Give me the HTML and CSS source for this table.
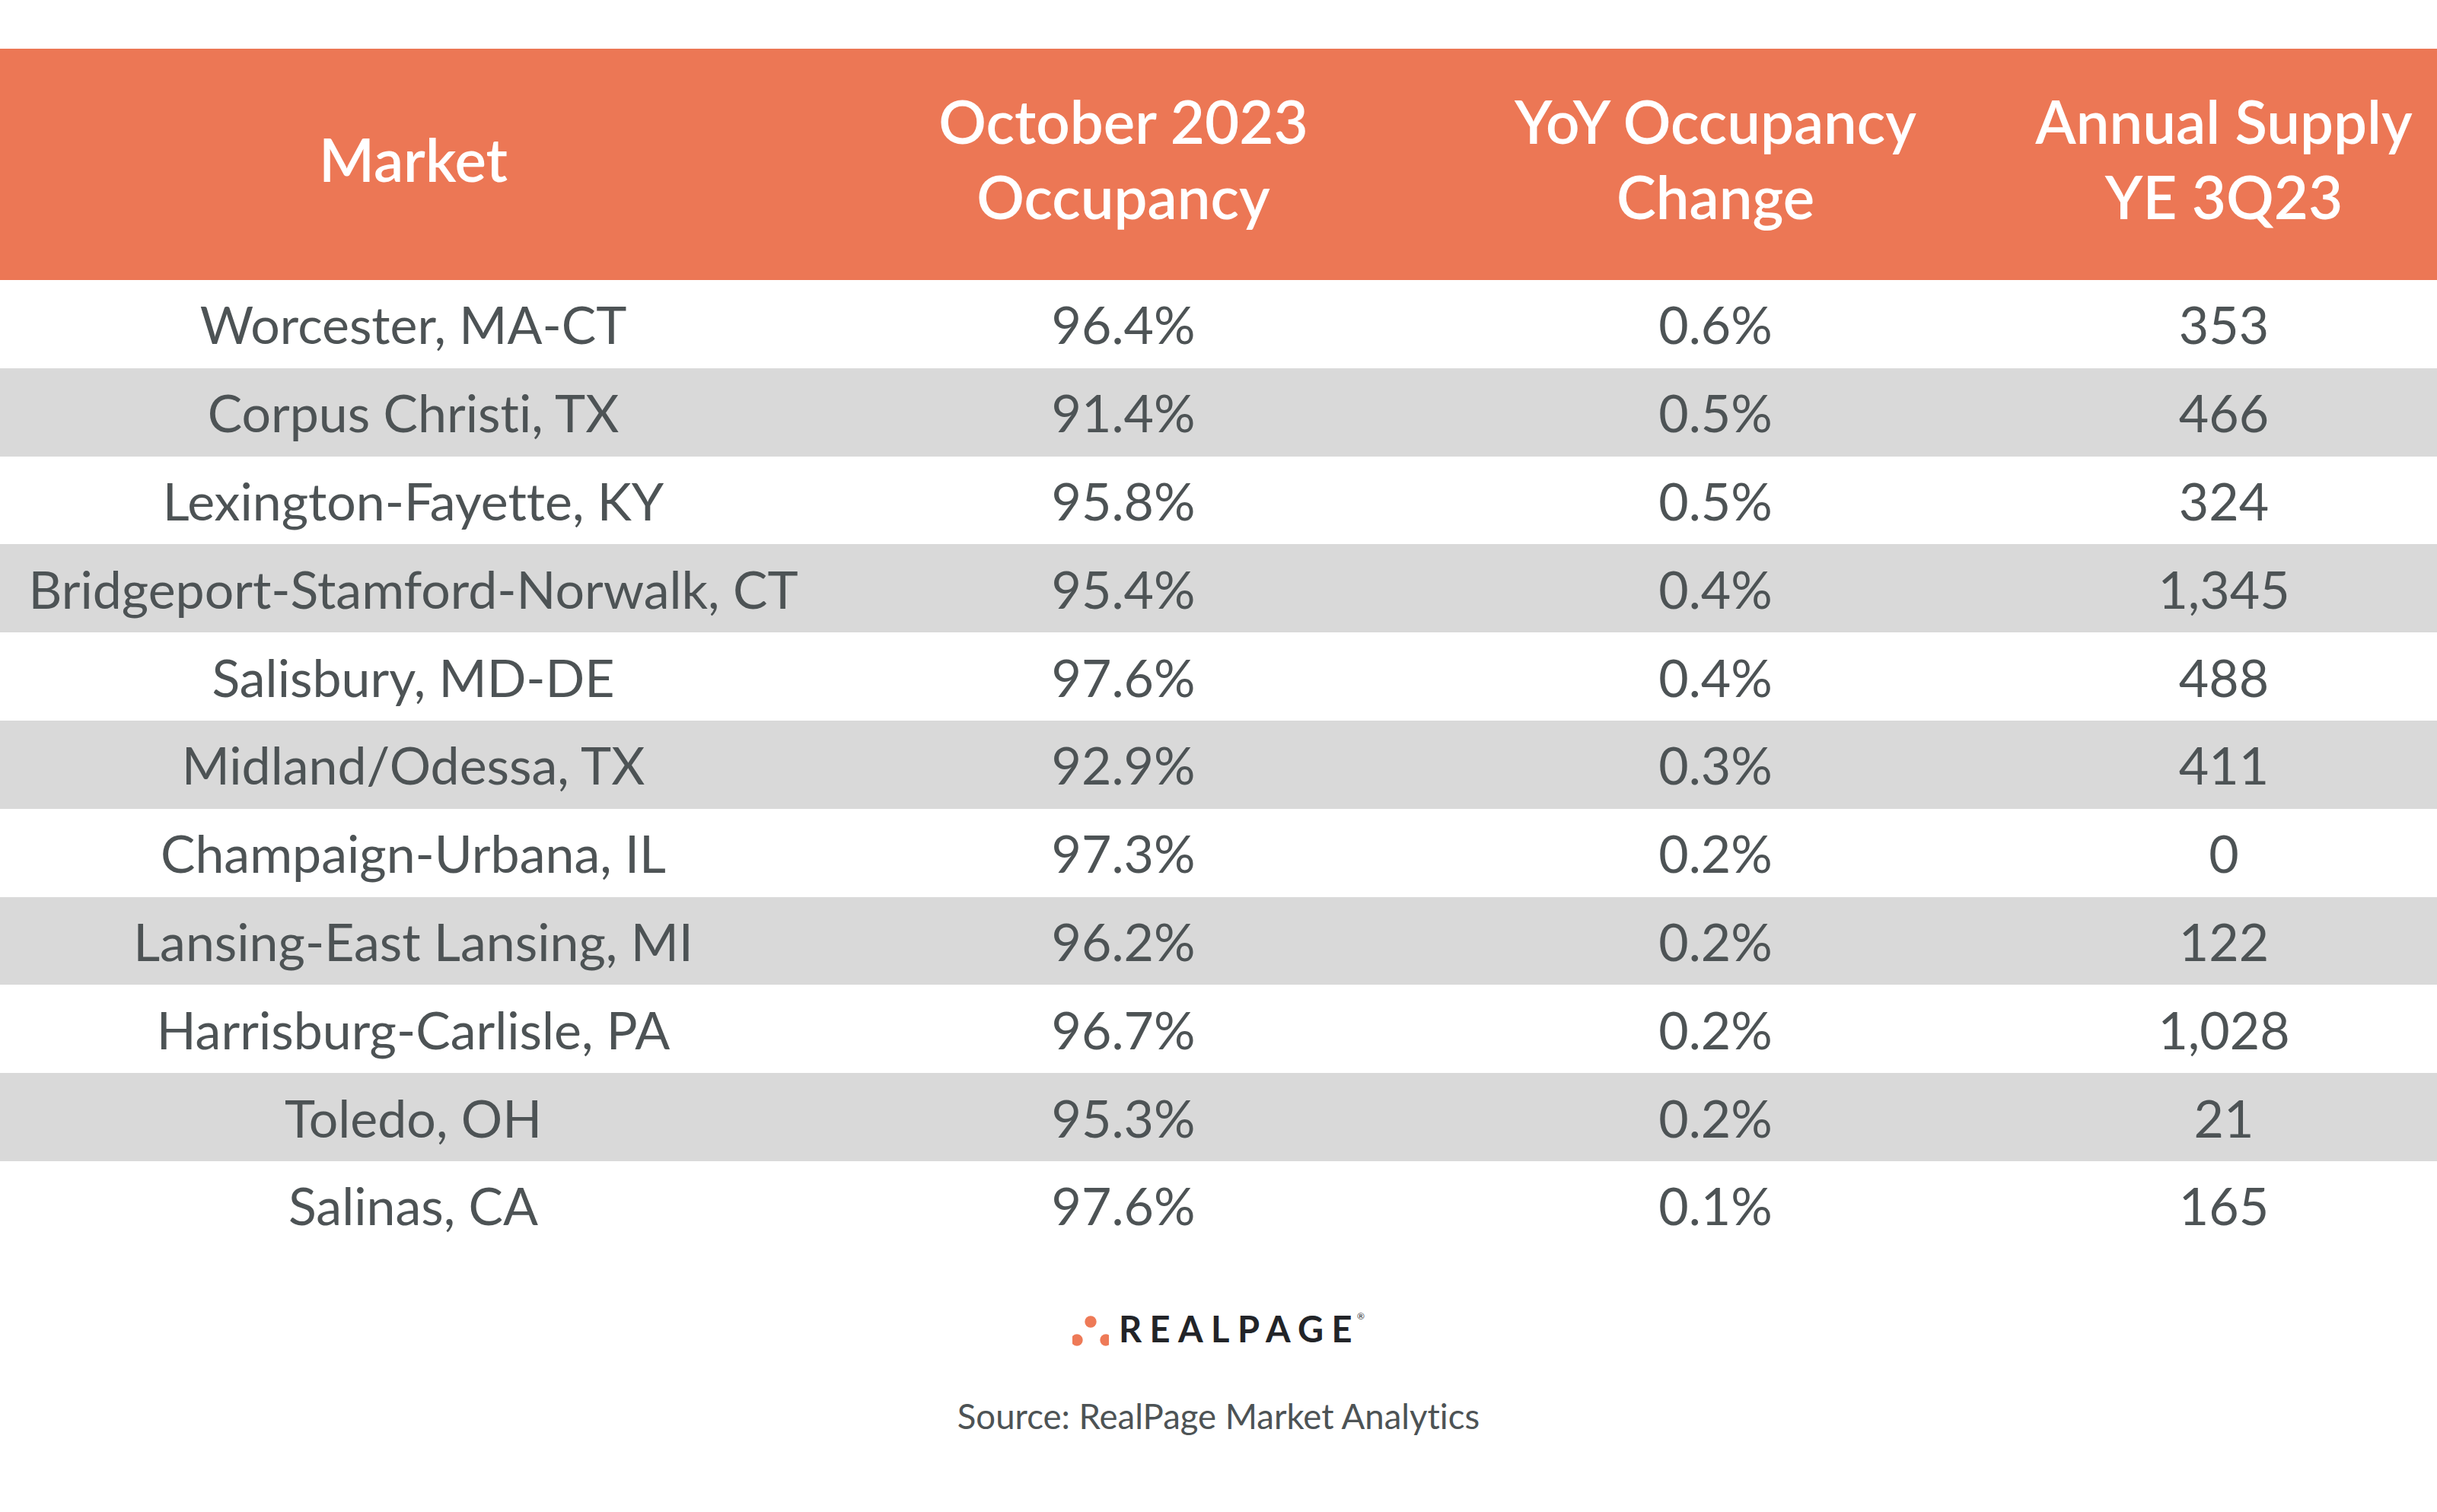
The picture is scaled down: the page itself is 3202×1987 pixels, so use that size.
FILE: index.html
```html
<!DOCTYPE html>
<html lang="en">
<head>
<meta charset="utf-8">
<title>Top Occupancy Gains</title>
<link rel="stylesheet" href="styles.css">
</head>
<body>
<div class="page">
  <div class="table">
    <div class="row head">
      <div class="cell">Market</div>
      <div class="cell">October 2023<br>Occupancy</div>
      <div class="cell">YoY Occupancy<br>Change</div>
      <div class="cell">Annual Supply<br>YE 3Q23</div>
    </div>
    <div class="row"><div class="cell">Worcester, MA-CT</div><div class="cell">96.4%</div><div class="cell">0.6%</div><div class="cell">353</div></div>
    <div class="row alt"><div class="cell">Corpus Christi, TX</div><div class="cell">91.4%</div><div class="cell">0.5%</div><div class="cell">466</div></div>
    <div class="row"><div class="cell">Lexington-Fayette, KY</div><div class="cell">95.8%</div><div class="cell">0.5%</div><div class="cell">324</div></div>
    <div class="row alt"><div class="cell">Bridgeport-Stamford-Norwalk, CT</div><div class="cell">95.4%</div><div class="cell">0.4%</div><div class="cell">1,345</div></div>
    <div class="row"><div class="cell">Salisbury, MD-DE</div><div class="cell">97.6%</div><div class="cell">0.4%</div><div class="cell">488</div></div>
    <div class="row alt"><div class="cell">Midland/Odessa, TX</div><div class="cell">92.9%</div><div class="cell">0.3%</div><div class="cell">411</div></div>
    <div class="row"><div class="cell">Champaign-Urbana, IL</div><div class="cell">97.3%</div><div class="cell">0.2%</div><div class="cell">0</div></div>
    <div class="row alt"><div class="cell">Lansing-East Lansing, MI</div><div class="cell">96.2%</div><div class="cell">0.2%</div><div class="cell">122</div></div>
    <div class="row"><div class="cell">Harrisburg-Carlisle, PA</div><div class="cell">96.7%</div><div class="cell">0.2%</div><div class="cell">1,028</div></div>
    <div class="row alt"><div class="cell">Toledo, OH</div><div class="cell">95.3%</div><div class="cell">0.2%</div><div class="cell">21</div></div>
    <div class="row"><div class="cell">Salinas, CA</div><div class="cell">97.6%</div><div class="cell">0.1%</div><div class="cell">165</div></div>
  </div>
  <div class="logo">
    <svg class="dots" width="48" height="40" viewBox="0 0 48 40">
      <circle cx="24" cy="8" r="7.7" fill="#ee7a57"/>
      <circle cx="6" cy="32" r="7.7" fill="#ee7a57"/>
      <circle cx="44" cy="32" r="7.7" fill="#ee7a57"/>
    </svg>
    <span class="brand">REALPAGE</span><span class="reg">®</span>
  </div>
  <div class="source">Source: RealPage Market Analytics</div>
</div>
</body>
</html>
```
FILE: styles.css
```css
html, body {
  margin: 0;
  padding: 0;
  background: #ffffff;
}
.page {
  width: 3202px;
  height: 1987px;
  font-family: Lato, "Open Sans", sans-serif;
  font-variant-ligatures: none;
  font-feature-settings: "liga" 0, "clig" 0;
  color: #4d5355;
  padding-top: 64px;
  box-sizing: border-box;
}
.table {
  display: flex;
  flex-direction: column;
}
.row {
  display: grid;
  grid-template-columns: 1086px 780px 776px 560px;
  height: 115.8px;
  align-items: center;
  font-size: 68px;
}
.row.alt {
  background: #d9d9d9;
}
.row.head {
  height: 304px;
  background: #ec7755;
  color: #ffffff;
  font-size: 78px;
  font-weight: 600;
  line-height: 99px;
  padding-bottom: 14px;
  box-sizing: border-box;
}
.cell {
  text-align: center;
  white-space: nowrap;
}
.logo {
  display: flex;
  justify-content: center;
  align-items: flex-end;
  margin-top: 81px;
  height: 46px;
}
.dots {
  display: block;
  margin-right: 13px;
}
.brand {
  font-family: Lato, sans-serif;
  font-weight: 700;
  font-size: 47px;
  line-height: 46px;
  letter-spacing: 10.4px;
  color: #222428;
}
.reg {
  font-size: 12px;
  line-height: 14px;
  align-self: flex-start;
  color: #222428;
  margin-left: -4px;
}
.source {
  text-align: center;
  font-size: 45.5px;
  margin-top: 64px;
  color: #4d5355;
}
```
